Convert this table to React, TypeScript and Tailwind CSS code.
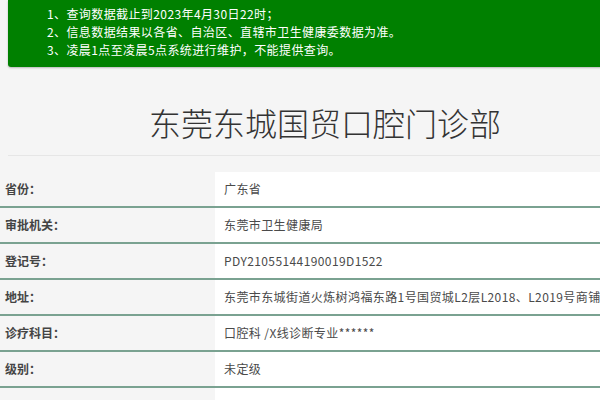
const notices = [
  "1、查询数据截止到2023年4月30日22时；",
  "2、信息数据结果以各省、自治区、直辖市卫生健康委数据为准。",
  "3、凌晨1点至凌晨5点系统进行维护，不能提供查询。",
];

const rows = [
  { label: "省份：", value: "广东省" },
  { label: "审批机关：", value: "东莞市卫生健康局" },
  { label: "登记号：", value: "PDY21055144190019D1522" },
  { label: "地址：", value: "东莞市东城街道火炼树鸿福东路1号国贸城L2层L2018、L2019号商铺" },
  { label: "诊疗科目：", value: "口腔科 /X线诊断专业******" },
  { label: "级别：", value: "未定级" },
  { label: "", value: "" },
];

export default function App() {
  return (
    <div
      className="h-[400px] w-[600px] overflow-hidden bg-[#f5f5f5] text-[#333]"
      style={{ fontFamily: '"Microsoft YaHei", "Noto Sans CJK SC", sans-serif' }}
    >
      <div className="w-[680px]">
        {/* 提示 */}
        <div className="ml-2 rounded-b-[3px] bg-[#008000] px-[39px] pt-[5px] pb-[8px] text-[12px] leading-[18px] tracking-[0.4px] text-white shadow-[0_1px_2px_rgba(0,0,0,0.25)]">
          {notices.map((n) => (
            <p key={n}>{n}</p>
          ))}
        </div>

        <h1 className="mt-[31px] w-[650px] text-center text-[32px] leading-[48px] font-light text-[#333]">
          东莞东城国贸口腔门诊部
        </h1>
        <div className="mt-[9px] ml-2 border-t border-[#e6e6e6]" />

        <div className="mt-4">
          {rows.map((r, i) => (
            <div key={i} className="grid grid-cols-[215px_1fr] border-b-2 border-[#7aa291]">
              <div className="flex h-[34px] items-center pl-[5px] text-[12px] font-bold text-[#444]">{r.label}</div>
              <div className="flex h-[34px] items-center bg-white pl-[9px] text-[12px] tracking-[0.4px] whitespace-nowrap text-[#4a4a4a]">
                {r.value}
              </div>
            </div>
          ))}
        </div>
      </div>
    </div>
  );
}
